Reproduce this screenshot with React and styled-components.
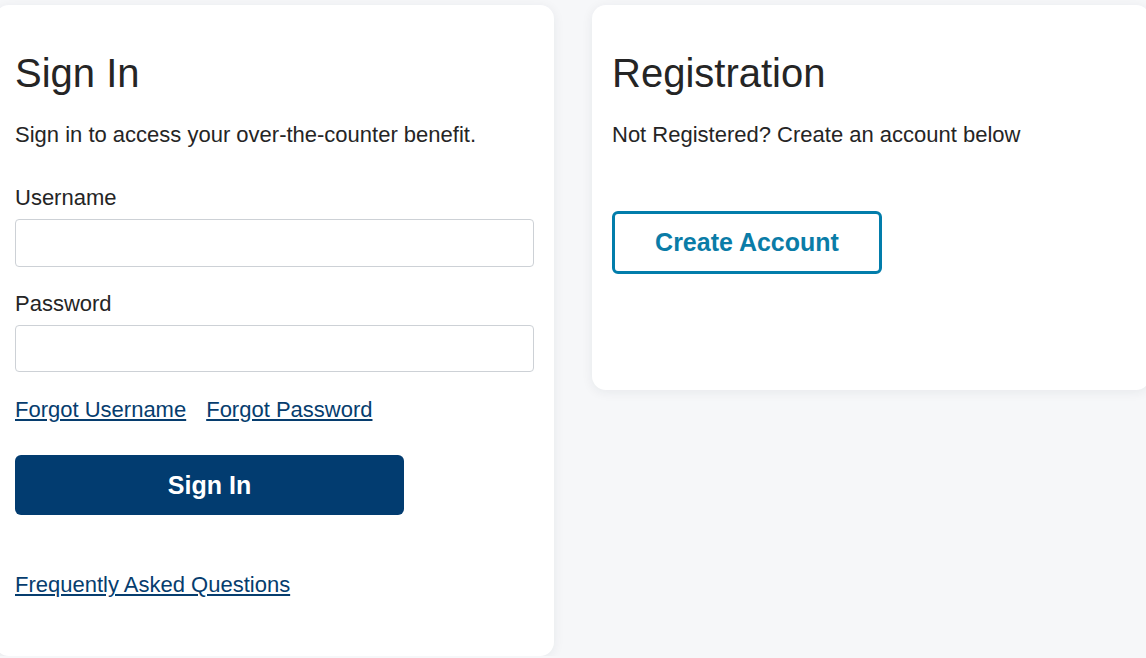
import React from "react";
import styled, { createGlobalStyle } from "styled-components";

const GlobalStyle = createGlobalStyle`
  html, body {
    margin: 0;
    padding: 0;
    background: #f6f7f9;
    font-family: "Liberation Sans", Arial, sans-serif;
    color: #252525;
    overflow: hidden;
  }
`;

const Page = styled.div`
  display: flex;
  align-items: flex-start;
  gap: 38px;
  padding-top: 5px;
  margin-left: -5px;
`;

const Card = styled.section`
  flex: 0 0 558px;
  box-sizing: border-box;
  background: #ffffff;
  border-radius: 14px;
  box-shadow: 0 2px 12px rgba(30, 40, 60, 0.07);
  padding: 44px 20px ${(p) => p.$bottom}px 20px;
`;

const Title = styled.h1`
  margin: 0 0 21px 0;
  font-size: 40px;
  line-height: 48px;
  font-weight: 400;
  color: #252525;
`;

const Text = styled.p`
  margin: 0;
  font-size: 22px;
  line-height: 33px;
`;

const Field = styled.div`
  display: flex;
  flex-direction: column;
  gap: 5px;
  margin-top: ${(p) => p.$top}px;
`;

const Label = styled.label`
  font-size: 22px;
  line-height: 33px;
`;

const Input = styled.input`
  box-sizing: border-box;
  width: 519px;
  height: ${(p) => p.$h}px;
  border: 1px solid #cdd1d6;
  border-radius: 4px;
  font-size: 20px;
  padding: 0 12px;
  background: #ffffff;
`;

const LinkRow = styled.div`
  display: flex;
  gap: 20px;
  margin-top: 21px;
`;

const Link = styled.a`
  font-size: 22px;
  line-height: 33px;
  color: #063d6e;
  text-decoration: underline;
  text-underline-offset: 2px;
  cursor: pointer;
`;

const FaqRow = styled.div`
  margin-top: 53px;
`;

const PrimaryButton = styled.button`
  display: flex;
  align-items: center;
  justify-content: center;
  width: 389px;
  height: 60px;
  margin-top: 29px;
  border: none;
  border-radius: 6px;
  background: #023c70;
  color: #ffffff;
  font-family: "Liberation Sans", Arial, sans-serif;
  font-size: 25px;
  font-weight: 700;
  cursor: pointer;
`;

const OutlineButton = styled.button`
  display: flex;
  align-items: center;
  justify-content: center;
  box-sizing: border-box;
  width: 270px;
  height: 63px;
  margin-top: 60px;
  border: 3px solid #027dab;
  border-radius: 6px;
  background: #ffffff;
  color: #0a7ca7;
  font-family: "Liberation Sans", Arial, sans-serif;
  font-size: 25px;
  font-weight: 700;
  cursor: pointer;
`;

function App() {
  return (
    <>
      <GlobalStyle />
      <Page>
        <Card $bottom={55}>
          <Title>Sign In</Title>
          <Text>Sign in to access your over-the-counter benefit.</Text>
          <Field $top={30}>
            <Label htmlFor="username">Username</Label>
            <Input type="text" id="username" $h={48} />
          </Field>
          <Field $top={20}>
            <Label htmlFor="password">Password</Label>
            <Input type="password" id="password" $h={47} />
          </Field>
          <LinkRow>
            <Link>Forgot Username</Link>
            <Link>Forgot Password</Link>
          </LinkRow>
          <PrimaryButton type="button">Sign In</PrimaryButton>
          <FaqRow>
            <Link>Frequently Asked Questions</Link>
          </FaqRow>
        </Card>
        <Card $bottom={116}>
          <Title>Registration</Title>
          <Text>Not Registered? Create an account below</Text>
          <OutlineButton type="button">Create Account</OutlineButton>
        </Card>
      </Page>
    </>
  );
}

export default App;
